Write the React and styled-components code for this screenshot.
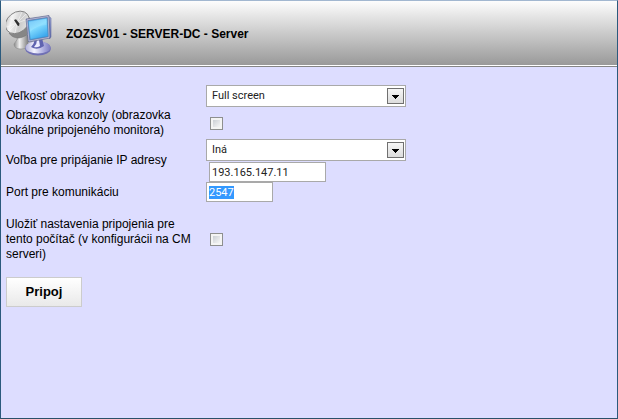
import React, { useEffect, useRef } from "react";
import styled, { createGlobalStyle } from "styled-components";

const GlobalStyle = createGlobalStyle`
  * { box-sizing: border-box; }
  html, body, #root { height: 100%; }
  body {
    margin: 0;
    overflow: hidden;
    font: 12px/15px "Liberation Sans", Arial, sans-serif;
    color: #000;
  }
`;

const Window = styled.div`
  display: flex;
  flex-direction: column;
  min-height: 100%;
  background: #ddddff;
  border: 1px solid #2b5a7d;
  border-top-color: #a2b7d0;
  border-bottom-color: #2b5069;
`;

const Header = styled.header`
  display: flex;
  align-items: center;
  gap: 14px;
  height: 66px;
  padding: 0 5px;
  background: linear-gradient(#fdfdfd, #999999 64px, #ffffff 64px, #ffffff 65px, #858585 65px);
`;

const Title = styled.h1`
  margin: 0;
  font-size: 12px;
  line-height: 16px;
`;

const Form = styled.form`
  display: flex;
  flex-direction: column;
  align-items: flex-start;
  padding: 18px 5px;
`;

const Row = styled.div`
  display: grid;
  grid-template-columns: 200px 1fr;
  align-items: center;
  align-self: stretch;
  margin-bottom: ${(p) => p.$after || 0}px;
`;

const Label = styled.label`
  padding-right: 8px;
`;

const Fields = styled.div`
  display: flex;
  flex-direction: column;
  align-items: flex-start;
  gap: 1px;
`;

const SelectBox = styled.div`
  display: grid;
  align-items: center;
  width: 200px;
  max-width: 100%;
  height: 22px;
  background: #fff;
  border: 1px solid #a9a9a9;

  > * { grid-area: 1 / 1; }
`;

const NativeSelect = styled.select`
  appearance: none;
  width: 100%;
  height: 20px;
  margin: 0;
  padding: 0 24px 0 5px;
  border: 0;
  border-radius: 0;
  outline: 0;
  background: transparent;
  font: 11px/16px Roboto, sans-serif;
  color: #222;
`;

const Arrow = styled.svg`
  justify-self: end;
  width: 17px;
  height: 16px;
  margin-right: 1px;
  pointer-events: none;
  background: linear-gradient(#f6f6f6, #dcdcdc);
  border: 1px solid #707070;
`;

const TextInput = styled.input`
  width: ${(p) => p.$width}px;
  height: 20px;
  margin: 0 0 0 ${(p) => p.$indent || 0}px;
  padding: 0 2px;
  border: 1px solid #a9a9a9;
  border-radius: 0;
  outline: 0;
  background: #fff;
  font: 11px/16px Roboto, sans-serif;
  color: #222;

  &::selection { background: #3399ff; color: #fff; }
`;

const CheckBox = styled.input`
  appearance: none;
  width: 13px;
  height: 13px;
  margin: 0 4px;
  border: 1px solid #8e8f8f;
  background: linear-gradient(135deg, #cbcfd5, #f6f6f6) content-box, #f4f4f4;
  padding: 2px;

  &:checked { background: #4b6a9b content-box; }
`;

const SubmitButton = styled.button`
  min-width: 76px;
  height: 30px;
  padding: 0 18px;
  border: 1px solid #cccccc;
  border-radius: 0;
  background: linear-gradient(#ffffff, #e9e9e9);
  font: bold 13px/16px "Liberation Sans", Arial, sans-serif;
  color: #000;
`;

function Select({ id, options }) {
  return (
    <SelectBox>
      <NativeSelect id={id}>
        {options.map((o) => <option key={o}>{o}</option>)}
      </NativeSelect>
      <Arrow viewBox="0 0 15 14" aria-hidden="true">
        <path d="M4 6h7v1h-1v1h-1v1h-1v1h-1v-1h-1v-1h-1v-1h-1z" fill="#000" shapeRendering="crispEdges" />
      </Arrow>
    </SelectBox>
  );
}

function RemoteIcon() {
  return (
    <svg width="46" height="48" viewBox="0 0 46 48" aria-hidden="true">
      <defs>
        <linearGradient id="dish" x1="0" y1="0" x2="1" y2="1">
          <stop offset="0" stopColor="#a5a5a5" />
          <stop offset=".3" stopColor="#f4f4f4" />
          <stop offset=".6" stopColor="#cdcdcd" />
          <stop offset="1" stopColor="#f0f0f0" />
        </linearGradient>
        <linearGradient id="foot" x1="0" y1="0" x2="1" y2="0">
          <stop offset="0" stopColor="#8a8a8a" />
          <stop offset=".4" stopColor="#f0f0f0" />
          <stop offset="1" stopColor="#808080" />
        </linearGradient>
        <linearGradient id="screen" x1="0" y1="0" x2=".5" y2="1">
          <stop offset="0" stopColor="#5cb4f2" />
          <stop offset=".5" stopColor="#84dcff" />
          <stop offset="1" stopColor="#3ca8ee" />
        </linearGradient>
        <linearGradient id="side" x1="0" y1="0" x2="0" y2="1">
          <stop offset="0" stopColor="#a8b0d4" />
          <stop offset="1" stopColor="#5260ad" />
        </linearGradient>
        <linearGradient id="stand" x1="0" y1="0" x2="1" y2="0">
          <stop offset="0" stopColor="#b4b4dc" />
          <stop offset=".35" stopColor="#f4f4ff" />
          <stop offset=".7" stopColor="#b0b0e0" />
          <stop offset="1" stopColor="#7c7cc0" />
        </linearGradient>
      </defs>
      <path d="M12 25Q12 30 8 34Q8 39 15 39Q20 39 22 37V25z" fill="url(#foot)" stroke="#8a8a8a" strokeWidth=".6" />
      <path d="M3 23Q6 28 13 28Q20 27 24 21L23 7z" fill="#868686" stroke="#757575" strokeWidth=".6" />
      <ellipse cx="11.3" cy="12.4" rx="13" ry="10" transform="rotate(-38 11.3 12.4)" fill="url(#dish)" stroke="#808080" strokeWidth=".9" />
      <path d="M11 13 3 21M11 13 1 17M11 13 20 4M11 13 16 2M11 13 9 23M11 13 4 8M11 13 22 9" stroke="#fff" strokeWidth="1" opacity=".5" />
      <path d="M8 10 10 9.3 13.5 13.5 13 16 11.5 15.5z" fill="#303030" />
      <ellipse cx="32" cy="38.5" rx="12.8" ry="7" fill="#7070b4" />
      <ellipse cx="32" cy="37.4" rx="12.4" ry="6.2" fill="url(#stand)" />
      <path d="M29 29Q28 34 25 37Q31 41 38 36L36 28z" fill="#6064b0" />
      <path d="M31 30Q31 34 28 37Q31 38 34 36L33 30z" fill="#ececff" />
      <path d="M42 6 45 8V27L43.5 29z" fill="url(#side)" stroke="#6670a8" strokeWidth=".6" />
      <path d="M20 9 43 5.5 44 28 22.5 32z" fill="#747ba8" stroke="#6a7093" strokeWidth=".7" />
      <path d="M21 9.8 42.2 6.5 43 27.4 23 31z" fill="none" stroke="#c8cce2" strokeWidth=".7" />
      <path d="M22.2 11 41 8 42 26.3 24.3 29.5z" fill="url(#screen)" stroke="#3b90cc" strokeWidth=".6" />
      <path d="M23 12 40.5 9V15Q31 15 24 22z" fill="#b8edff" opacity=".25" />
    </svg>
  );
}

export default function App() {
  const port = useRef(null);
  useEffect(() => {
    port.current.focus();
    port.current.select();
  }, []);

  return (
    <>
      <GlobalStyle />
      <Window>
        <Header>
          <RemoteIcon />
          <Title>ZOZSV01 - SERVER-DC - Server</Title>
        </Header>
        <Form onSubmit={(e) => e.preventDefault()}>
          <Row $after={1}>
            <Label htmlFor="size">Veľkosť obrazovky</Label>
            <Select id="size" options={["Full screen"]} />
          </Row>
          <Row $after={1}>
            <Label htmlFor="console">Obrazovka konzoly (obrazovka lokálne pripojeného monitora)</Label>
            <CheckBox type="checkbox" id="console" />
          </Row>
          <Row>
            <Label htmlFor="ip-choice">Voľba pre pripájanie IP adresy</Label>
            <Fields>
              <Select id="ip-choice" options={["Iná"]} />
              <TextInput aria-label="IP adresa" $width={117} $indent={3} defaultValue="193.165.147.11" />
            </Fields>
          </Row>
          <Row $after={15}>
            <Label htmlFor="port">Port pre komunikáciu</Label>
            <TextInput id="port" ref={port} $width={67} defaultValue="2547" />
          </Row>
          <Row $after={15}>
            <Label htmlFor="save">Uložiť nastavenia pripojenia pre tento počítač (v konfigurácii na CM serveri)</Label>
            <CheckBox type="checkbox" id="save" />
          </Row>
          <SubmitButton type="submit">Pripoj</SubmitButton>
        </Form>
      </Window>
    </>
  );
}
